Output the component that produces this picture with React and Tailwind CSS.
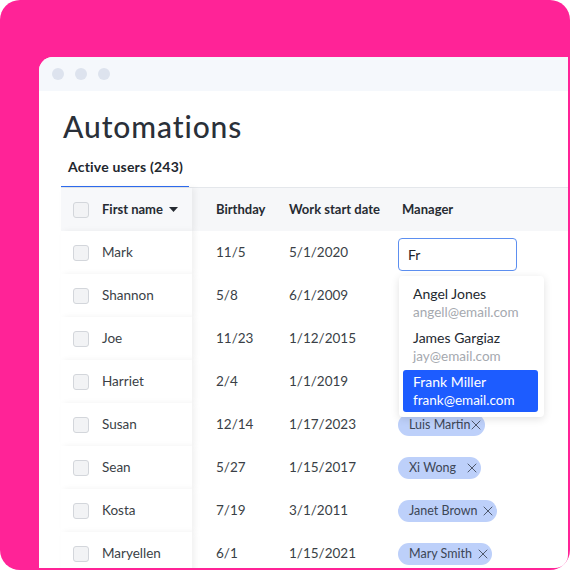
import { X } from 'lucide-react';

const people = [
  { name: 'Mark', birthday: '11/5', start: '5/1/2020', manager: 'input' },
  { name: 'Shannon', birthday: '5/8', start: '6/1/2009' },
  { name: 'Joe', birthday: '11/23', start: '1/12/2015' },
  { name: 'Harriet', birthday: '2/4', start: '1/1/2019' },
  { name: 'Susan', birthday: '12/14', start: '1/17/2023', manager: 'Luis Martin', gap: '-ml-[3px]' },
  { name: 'Sean', birthday: '5/27', start: '1/15/2017', manager: 'Xi Wong', gap: 'ml-[8px]' },
  { name: 'Kosta', birthday: '7/19', start: '3/1/2011', manager: 'Janet Brown', gap: 'ml-[3px]' },
  { name: 'Maryellen', birthday: '6/1', start: '1/15/2021', manager: 'Mary Smith', gap: 'ml-[3px]' },
];

const options = [
  { name: 'Angel Jones', email: 'angell@email.com' },
  { name: 'James Gargiaz', email: 'jay@email.com' },
  { name: 'Frank Miller', email: 'frank@email.com', active: true },
];

function Checkbox() {
  return <span className="w-4 h-4 shrink-0 rounded-[3px] border border-[#d3d6db] bg-[#f2f3f5]" />;
}

function ManagerPicker() {
  return (
    <div className="relative mt-[4px]">
      <div className="w-[119px] h-[33px] rounded-[4px] border border-[#5d8ff0] flex items-center pl-[9px] text-[14px] text-[#1f242b]">
        Fr
      </div>
      <div className="absolute left-[1px] top-[38px] z-20 w-[145px] bg-white rounded-[4px] shadow-[0_2px_8px_rgba(0,0,0,0.12)] pt-[6px] pb-[5px] flex flex-col gap-[2px]">
        {options.map(o => (
          <div key={o.name}
            className={`ml-[4px] mr-[6px] h-[42px] rounded-[3px] pl-[10px] py-[3px] flex flex-col justify-center leading-[18px] ${o.active ? 'bg-[#1d5cff] text-white' : ''}`}>
            <span className={`text-[14px] ${o.active ? 'text-white' : 'text-[#23282f]'}`}>{o.name}</span>
            <span className={`text-[13.5px] ${o.active ? 'text-white' : 'text-[#a5a9af]'}`}>{o.email}</span>
          </div>
        ))}
      </div>
    </div>
  );
}

function Chip({ label, gap }) {
  return (
    <span className="inline-flex items-center h-[22px] rounded-full bg-[#bdd0fa] pl-[11px] pr-[1px] text-[12.5px] text-[#3c4656]">
      <span className="pt-[1px]">{label}</span>
      <X size={16} strokeWidth={1.3} className={gap} />
    </span>
  );
}

export default function App() {
  return (
    <div className="w-[570px] h-[570px] bg-white" style={{ fontFamily: 'Lato, "Open Sans", sans-serif' }}>
      <div className="w-[570px] h-[570px] bg-[#ff2397] rounded-[20px] pl-[39px] pt-[57px] pr-[2px] pb-[2px] flex">
        <div className="flex-1 bg-white rounded-tl-[14px] rounded-br-[13px] overflow-hidden flex flex-col">
          {/* window chrome */}
          <div className="h-[34px] shrink-0 bg-[#f5f8fc] flex items-center gap-[11px] pl-[13px]">
            <span className="w-3 h-3 rounded-full bg-[#dde3ee]" />
            <span className="w-3 h-3 rounded-full bg-[#dde3ee]" />
            <span className="w-3 h-3 rounded-full bg-[#dde3ee]" />
          </div>

          <div className="pl-[22px] flex-1 flex flex-col">
            <h1 className="mt-[17px] ml-[2px] text-[30px] leading-[36px] font-medium tracking-[0.9px] text-[#2a3039]">Automations</h1>

            <div className="mt-[14px] w-[128px] border-b-2 border-[#2e6cf0] pl-[7px] pb-[10px] text-[14px] leading-[18px] font-bold tracking-[0.2px] text-[#22272e]">
              Active users (243)
            </div>

            <div className="-mt-[1px] border-t border-[#e4e7eb] flex-1 flex flex-col text-[13.5px] text-[#3a3f46]">
              {/* header */}
              <div className="h-[43px] shrink-0 flex items-center bg-[#f6f7f9] font-bold text-[13px] text-[#262b32]">
                <div className="w-[131px] h-full flex items-center gap-[13px] pl-[12px] bg-[#f7f8fa] relative z-10 shadow-[3px_0_6px_rgba(0,0,0,0.06)]">
                  <Checkbox />
                  <span className="flex items-center gap-[6px]">
                    First name
                    <svg width="9" height="5" viewBox="0 0 9 5"><path d="M0 0h9L4.5 5z" fill="#262b32" /></svg>
                  </span>
                </div>
                <div className="w-[97px] pl-[24px]">Birthday</div>
                <div className="w-[109px]">Work start date</div>
                <div className="pl-[4px]">Manager</div>
              </div>

              {people.map(p => (
                <div key={p.name} className="h-[43px] shrink-0 flex items-center">
                  <div className="w-[131px] h-full flex items-center gap-[13px] pl-[12px] bg-white relative z-10 shadow-[3px_0_6px_rgba(0,0,0,0.06)]">
                    <Checkbox />
                    <span>{p.name}</span>
                  </div>
                  <div className="w-[97px] pl-[24px]">{p.birthday}</div>
                  <div className="w-[109px]">{p.start}</div>
                  <div>
                    {p.manager === 'input' && <ManagerPicker />}
                    {p.manager && p.manager !== 'input' && <Chip label={p.manager} gap={p.gap} />}
                  </div>
                </div>
              ))}
            </div>
          </div>
        </div>
      </div>
    </div>
  );
}
